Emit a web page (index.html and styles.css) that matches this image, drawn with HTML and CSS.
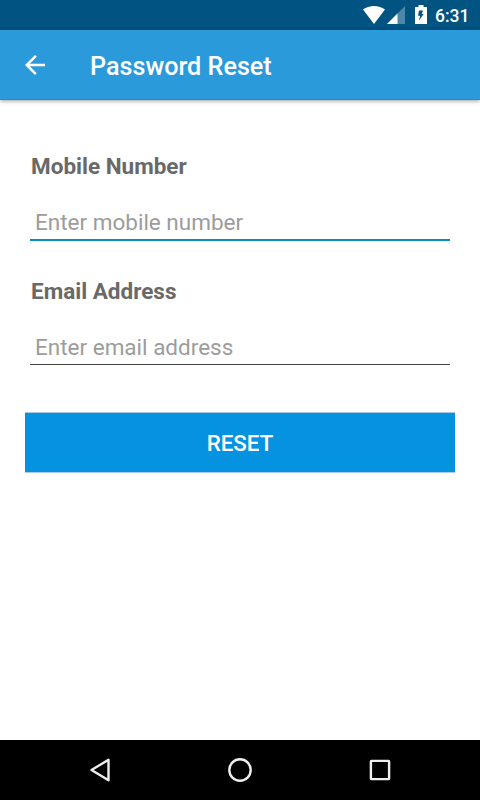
FILE: index.html
```html
<!DOCTYPE html>
<html lang="en">

<head>
    <meta charset="UTF-8">
    <meta name="viewport" content="width=device-width, initial-scale=1.0">
    <title>Password Reset</title>
    <link rel="stylesheet" href="styles.css">
</head>

<body>
    <div class="status-bar">
        <svg class="wifi" width="22" height="18" viewBox="0 0 22 18">
            <path d="M0 3.6C3.2 1.2 7 0 11 0s7.800 1.200 11 3.600L11 18z" fill="#fff"/>
        </svg>
        <svg class="signal" width="18" height="18" viewBox="0 0 18 18">
            <path d="M0 18L18 0v18z" fill="#fff" fill-opacity="0.3"/>
            <path d="M0 18L10.500 7.500v10.500z" fill="#fff"/>
        </svg>
        <svg class="battery" width="12" height="19" viewBox="0 0 12 19">
            <path d="M0.500 2h3V0h5v2h3q0.500 0 0.500 0.500v16q0 0.500-0.500 0.500h-11q-0.500 0-0.500-0.500v-16q0-0.500 0.500-0.500zM4 5.500L3 10.800h2.200L3.800 15.800 8.700 9H6.600L8.200 5.500z" fill="#fff" fill-rule="evenodd"/>
        </svg>
        <span class="clock">6:31</span>
    </div>

    <header class="toolbar">
        <svg class="back" width="30" height="30" viewBox="0 0 24 24">
            <path d="M20 11H7.830l5.590-5.590L12 4l-8 8 8 8 1.410-1.410L7.830 13H20v-2z" fill="#fff"/>
        </svg>
        <h1>Password Reset</h1>
    </header>

    <form class="reset-form">
        <div class="form-group">
            <label for="mobile">Mobile Number</label>
            <input class="active" type="tel" id="mobile" name="mobile" placeholder="Enter mobile number">
        </div>
        <div class="form-group">
            <label for="email">Email Address</label>
            <input type="email" id="email" name="email" placeholder="Enter email address">
        </div>
        <button type="submit">RESET</button>
    </form>

    <nav class="nav-bar">
        <svg width="30" height="30" viewBox="0 0 30 30">
            <path d="M6.500 15L23.500 4.800v20.400z"/>
        </svg>
        <svg width="30" height="30" viewBox="0 0 30 30">
            <circle cx="15" cy="15" r="10.700"/>
        </svg>
        <svg width="30" height="30" viewBox="0 0 30 30">
            <rect x="5.900" y="5.900" width="18.200" height="18.200" rx="0.500"/>
        </svg>
    </nav>
</body>

</html>
```
FILE: styles.css
```css
* {
    box-sizing: border-box;
}

body {
    font-family: Roboto, sans-serif;
    background-color: #fff;
    display: flex;
    flex-direction: column;
    height: 100vh;
    margin: 0;
    overflow: hidden;
}

.status-bar {
    height: 30px;
    background-color: #015481;
    display: flex;
    justify-content: flex-end;
    padding: 6px 10px 0 0;
}

.signal {
    margin-left: 2px;
}

.battery {
    margin: -1px 0 0 10px;
}

.clock {
    width: 35px;
    margin-left: 8px;
    color: #fff;
    font-size: 17.5px;
    font-weight: 500;
    line-height: 20px;
    white-space: nowrap;
}

.toolbar {
    height: 70px;
    background-color: #2b9ada;
    border-bottom: 1px solid #1592d3;
    box-shadow: 0 1px 4px rgba(0, 0, 0, 0.4);
    display: flex;
    align-items: center;
    padding: 1px 20px 0;
}

.toolbar h1 {
    margin: 4px 0 0 40px;
    color: #fff;
    font-size: 25.2px;
    font-weight: 500;
    line-height: 30px;
}

.reset-form {
    flex: 1;
    padding: 51px 25px 0;
}

.form-group {
    height: 125px;
    padding: 0 5px;
}

.form-group label {
    display: block;
    padding-left: 1px;
    color: #696969;
    font-size: 22.5px;
    font-weight: 700;
    line-height: 30px;
}

.form-group input {
    display: block;
    width: 100%;
    height: 34px;
    margin-top: 25px;
    padding: 0 5px 2px;
    border: none;
    border-bottom: 1px solid #444;
    border-radius: 0;
    background: none;
    font-family: inherit;
    font-size: 22.5px;
    outline: none;
}

.form-group input.active {
    height: 35px;
    border-bottom: 2px solid #048fc7;
}

.form-group input::placeholder {
    color: #9c9c9c;
    opacity: 1;
}

button {
    display: block;
    width: 100%;
    height: 61px;
    margin-top: 11px;
    padding: 0;
    border: none;
    border-top: 1px solid #a9c6e2;
    border-bottom: 1px solid #a9cdee;
    background-color: #0592e1;
    color: #fff;
    font-family: inherit;
    font-size: 22.3px;
    font-weight: 500;
}

.nav-bar {
    height: 60px;
    background-color: #000;
    display: flex;
    justify-content: center;
    align-items: center;
    gap: 110px;
}

.nav-bar svg {
    fill: none;
    stroke: #eee;
    stroke-width: 2.4;
    stroke-linejoin: round;
}
```
